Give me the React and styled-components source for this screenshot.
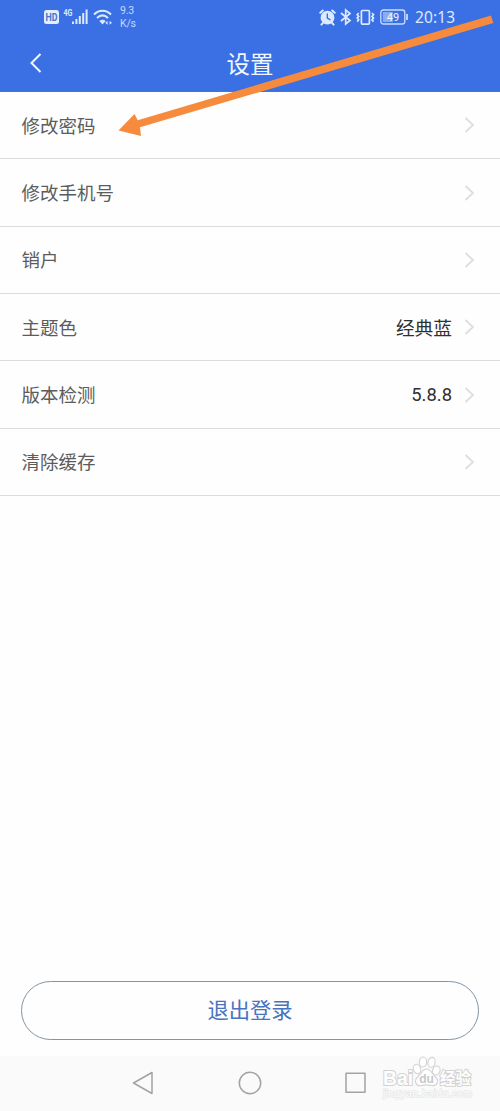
import React from 'react';
import styled, { createGlobalStyle } from 'styled-components';

const GlobalStyle = createGlobalStyle`
  * {
    box-sizing: border-box;
  }

  body {
    margin: 0;
    background: #fefefe;
    font-family: Roboto, "Noto Sans CJK SC", sans-serif;
  }
`;

const Screen = styled.div`
  position: relative;
  display: flex;
  flex-direction: column;
  width: 500px;
  height: 1111px;
  overflow: hidden;
  background: #fefefe;
`;

const Header = styled.header`
  height: 92px;
  background: #3b70e5;
  border-bottom: 1px solid #4a73ca;
  color: #f0f7ff;
`;

const StatusBar = styled.div`
  display: flex;
  justify-content: space-between;
  height: 35px;
  padding: 0 45px 0 44px;
`;

const StatusGroup = styled.div`
  display: flex;
  align-items: center;
  height: 34px;
  color: #dceaff;
`;

const StatusIcon = styled.svg`
  display: block;
  flex: none;
  margin-right: ${(props) => props.$gap || 0}px;
`;

const Speed = styled.div`
  font-size: 10.5px;
  line-height: 13px;
  letter-spacing: -0.2px;
  color: #c3d8fd;
`;

const Clock = styled.div`
  width: 40px;
  font-family: "Noto Sans", sans-serif;
  font-size: 15.5px;
  line-height: 34px;
  letter-spacing: 0.1px;
  white-space: nowrap;
`;

const TitleBar = styled.div`
  display: grid;
  grid-template-columns: 60px 1fr 60px;
  align-items: center;
  height: 56px;
`;

const BackButton = styled.button`
  display: flex;
  justify-content: flex-end;
  padding: 0 17px 0 0;
  border: none;
  background: none;
  color: inherit;
`;

const Title = styled.h1`
  margin: 0;
  padding-top: 4px;
  font-size: 23.5px;
  font-weight: 400;
  line-height: 52px;
  text-align: center;
`;

const SettingsList = styled.ul`
  margin: 0;
  padding: 0;
  list-style: none;
`;

const SettingsRow = styled.li`
  display: flex;
  align-items: center;
  height: 67.35px;
  padding: 0 25px 0 21.5px;
  border-bottom: 1px solid #dcdcdc;
`;

const RowLabel = styled.span`
  flex: 1;
  padding-bottom: 1px;
  font-size: 18.5px;
  color: #5c5c5c;
`;

const RowValue = styled.span`
  padding-bottom: ${(props) => (props.$numeric ? 0 : 2)}px;
  margin-right: 12px;
  font-size: ${(props) => (props.$numeric ? 18.4 : 18.7)}px;
  color: #303030;
`;

const Footer = styled.div`
  margin-top: auto;
  padding: 0 21px 16px;
`;

const LogoutButton = styled.button`
  display: block;
  width: 100%;
  height: 59px;
  padding: 0 0 4px;
  border: 1px solid #8394a3;
  border-radius: 30px;
  background: #fefefe;
  font-family: inherit;
  font-size: 21.3px;
  color: #4873bd;
`;

const NavBar = styled.nav`
  display: flex;
  align-items: center;
  height: 55px;
  padding: 0 0 1px 132px;
  background: #fafafa;
`;

const NavIcon = styled.svg`
  display: block;
  margin-right: 82px;
  fill: none;
  stroke: #a3a3a3;
  stroke-width: 1.5;
  stroke-linejoin: round;
`;

const Pointer = styled.svg`
  position: absolute;
  top: 0;
  left: 0;
  pointer-events: none;
`;

const Watermark = styled.svg`
  position: absolute;
  left: 378px;
  top: 1052px;
`;

const settings = [
  { label: '修改密码' },
  { label: '修改手机号' },
  { label: '销户' },
  { label: '主题色', value: '经典蓝' },
  { label: '版本检测', value: '5.8.8', numeric: true },
  { label: '清除缓存' }
];

function PhoneStatus() {
  return (
    <StatusBar>
      <StatusGroup>
        <StatusIcon width="15" height="14" viewBox="0 0 15 14" $gap={4}>
          <rect width="15" height="14" rx="2.5" fill="#e2edff" />
          <text x="7.5" y="10.8" textAnchor="middle" fontSize="10.5" fontWeight="700" textLength="12" lengthAdjust="spacingAndGlyphs" fill="#4775cc">HD</text>
        </StatusIcon>
        <StatusIcon width="26" height="18" viewBox="0 0 26 18" $gap={4} fill="currentColor">
          <text x="0.5" y="8" fontSize="8.5" fontWeight="700" textLength="9" lengthAdjust="spacingAndGlyphs">4G</text>
          <rect x="9" y="13.5" width="2" height="2.5" />
          <rect x="12.4" y="11" width="2" height="5" />
          <rect x="15.8" y="8" width="2" height="8" />
          <rect x="19.2" y="5" width="2" height="11" />
          <rect x="22.6" y="1.5" width="2" height="14.5" />
        </StatusIcon>
        <StatusIcon width="20" height="17" viewBox="0 0 20 17" $gap={7} fill="none" stroke="currentColor" strokeWidth="2">
          <path d="M1 5.5C6 0.6 13 0.6 18 5.5" />
          <path d="M4 9C7.4 5.8 11.6 5.8 15 9" />
          <path d="M6.4 12C8.5 10.2 10.5 10.2 12.6 12L9.5 15.5Z" fill="currentColor" stroke="none" />
          <path d="M12.2 13.8l2.4-1.9v3.8zM19 13.8l-2.4-1.9v3.8z" fill="currentColor" stroke="none" />
        </StatusIcon>
        <Speed>
          9.3
          <br />
          K/s
        </Speed>
      </StatusGroup>
      <StatusGroup>
        <StatusIcon width="17" height="17" viewBox="0 0 17 17" $gap={4} fill="none" stroke="currentColor" strokeLinecap="round">
          <circle cx="8.5" cy="8.7" r="6.9" fill="currentColor" stroke="none" />
          <path d="M1.3 3.8L3.8 1.5M15.7 3.8L13.2 1.5M4 13.8L2.4 15.6M13 13.8L14.6 15.6" strokeWidth="2" />
          <path d="M8.3 4.9V9L11 10.7" stroke="#3b70e5" strokeWidth="1.4" />
        </StatusIcon>
        <StatusIcon width="12" height="18" viewBox="0 0 12 18" $gap={4} fill="none" stroke="currentColor" strokeWidth="1.7">
          <path d="M1 5L10 12.5L5.7 16V2L10 5.5L1 13" />
        </StatusIcon>
        <StatusIcon width="19" height="17" viewBox="0 0 19 17" $gap={5} fill="none" stroke="currentColor" strokeWidth="1.7">
          <rect x="5.4" y="1.5" width="8" height="13.6" rx="1" />
          <path d="M2.7 4L1.2 5.8L2.7 7.4L1.2 9.1L2.7 10.8L1.2 12.6M16 4L17.5 5.8L16 7.4L17.5 9.1L16 10.8L17.5 12.6" />
        </StatusIcon>
        <StatusIcon width="29" height="16" viewBox="0 0 29 16" $gap={6}>
          <rect x="0.8" y="1" width="24" height="14" rx="2.5" fill="none" stroke="#c8dcff" strokeWidth="1.3" />
          <rect x="2.8" y="3" width="10" height="10" fill="#8aacf2" />
          <text x="13" y="11.8" textAnchor="middle" fontSize="11" fill="#f4f8ff">49</text>
          <path d="M27 5V11" stroke="#c8dcff" strokeWidth="1.8" />
        </StatusIcon>
        <Clock>20:13</Clock>
      </StatusGroup>
    </StatusBar>
  );
}

function Chevron() {
  return (
    <svg width="11" height="16" viewBox="0 0 11 16" fill="none" stroke="#dedede" strokeWidth="1.8">
      <path d="M1.5 1L9 8L1.5 15" />
    </svg>
  );
}

function BaiduWatermark() {
  return (
    <Watermark width="104" height="52" viewBox="0 0 104 52" fill="#fefefe" stroke="#d2d2d2" strokeWidth="1.1">
      <g fontFamily="Liberation Sans, sans-serif" fontWeight="700" paintOrder="stroke" strokeWidth="2">
        <text x="5" y="32.5" fontSize="20" textLength="30" lengthAdjust="spacingAndGlyphs">Bai</text>
        <text x="62" y="31.5" fontSize="15.5" fontFamily="Noto Sans CJK SC, sans-serif" textLength="31">经验</text>
        <text x="5" y="45" fontSize="10" fontWeight="400" textLength="89" strokeWidth="1.2" stroke="#e3e3e3">jingyan.baidu.com</text>
      </g>
      <ellipse cx="39" cy="17" rx="3.7" ry="4.7" transform="rotate(-20 39 17)" />
      <ellipse cx="45" cy="10" rx="3.7" ry="5" />
      <ellipse cx="53.5" cy="10.3" rx="3.5" ry="5" transform="rotate(12 53.5 10.3)" />
      <ellipse cx="58.3" cy="18.5" rx="3.7" ry="4.5" transform="rotate(20 58.3 18.5)" />
      <path d="M48.5 17C53 17 54 22 57 24.5C62 29 59 34.5 53.5 33.5C50 32.8 46 32.8 43.5 33.5C37.5 34.8 35.5 28.5 40 24.5C43.5 21.5 44.5 17 48.5 17Z" />
      <text x="48.5" y="31" textAnchor="middle" fontFamily="Liberation Sans, sans-serif" fontSize="12" fontWeight="700" fill="#c8c8c8" stroke="none">du</text>
    </Watermark>
  );
}

function App() {
  return (
    <>
      <GlobalStyle />
      <Screen>
        <Header>
          <PhoneStatus />
          <TitleBar>
            <BackButton aria-label="返回">
              <svg width="14" height="20" viewBox="0 0 14 20" fill="none" stroke="currentColor" strokeWidth="2">
                <path d="M11.5 1L2.5 10L11.5 19" />
              </svg>
            </BackButton>
            <Title>设置</Title>
          </TitleBar>
        </Header>

        <SettingsList>
          {settings.map((item) => (
            <SettingsRow key={item.label}>
              <RowLabel>{item.label}</RowLabel>
              {item.value && <RowValue $numeric={item.numeric}>{item.value}</RowValue>}
              <Chevron />
            </SettingsRow>
          ))}
        </SettingsList>

        <Footer>
          <LogoutButton>退出登录</LogoutButton>
        </Footer>

        <NavBar>
          <NavIcon width="24" height="24" viewBox="0 0 24 24">
            <path d="M1.5 12L20 1.5V22.5Z" />
          </NavIcon>
          <NavIcon width="24" height="24" viewBox="0 0 24 24">
            <circle cx="12" cy="12" r="10.7" />
          </NavIcon>
          <NavIcon width="24" height="24" viewBox="0 0 24 24">
            <rect x="2" y="2.3" width="19" height="19" />
          </NavIcon>
        </NavBar>

        {/* Arrow pointing at the change password row */}
        <Pointer width="500" height="145" viewBox="0 0 500 145">
          <path d="M118.5 130.5L134.5 114L137.7 120.3L491 15.5L493.3 23L140 127.3L141 136Z" fill="#f68b3d" />
        </Pointer>

        <BaiduWatermark />
      </Screen>
    </>
  );
}

export default App;
